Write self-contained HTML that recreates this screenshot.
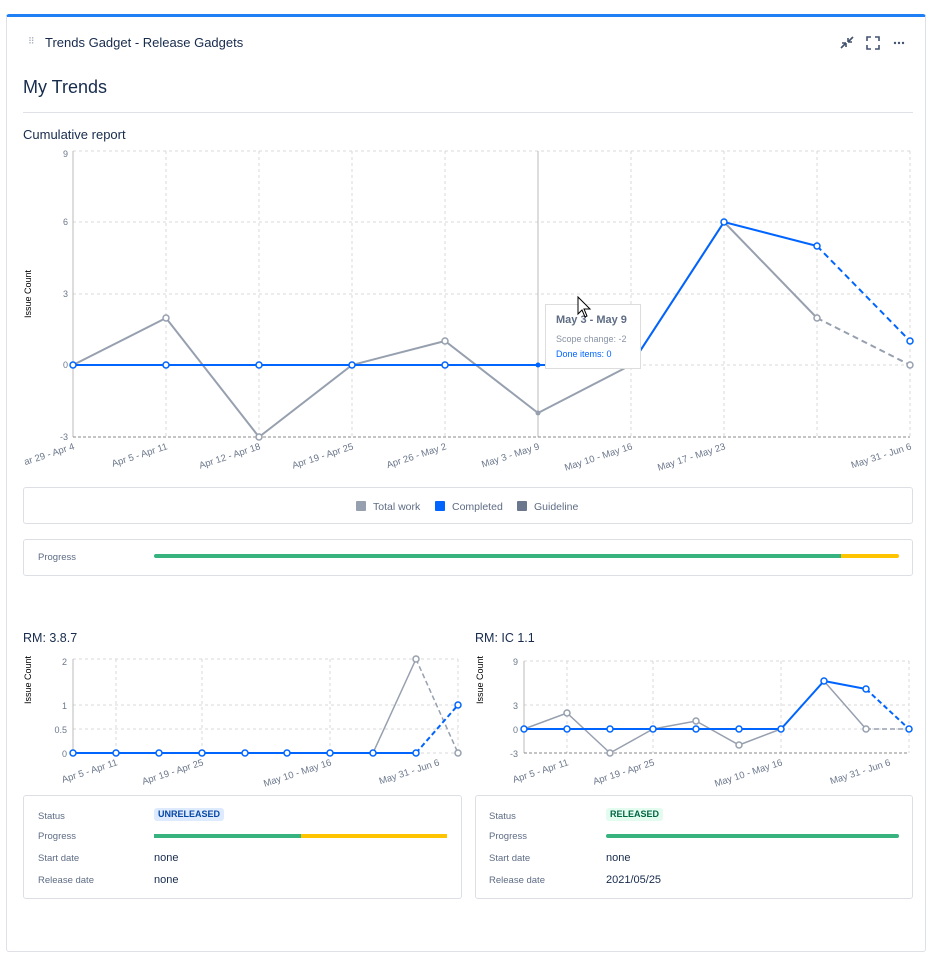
<!DOCTYPE html>
<html><head><meta charset="utf-8"><style>
body{margin:0;background:#fff;font-family:"Liberation Sans",sans-serif;width:933px;height:960px;overflow:hidden;position:relative}
.card{position:absolute;left:6px;top:14px;width:920px;height:938px;border:1px solid #dfe1e6;border-top:3px solid #1f7ff5;border-radius:3px;box-sizing:border-box}
.t{position:absolute;color:#172b4d;white-space:nowrap}
.box{position:absolute;border:1px solid #dcdfe4;border-radius:3px;box-sizing:border-box;background:#fff}
.lbl{position:absolute;font-size:9.5px;color:#5e6c84}
.val{position:absolute;font-size:11px;color:#172b4d}
svg text{font-family:"Liberation Sans",sans-serif}
</style></head><body>
<div class="card"></div>
<div class="t" style="left:28px;top:36px;font-size:9px;color:#a5adba;letter-spacing:-1px">⠿</div>
<div class="t" style="left:45px;top:35px;font-size:13px">Trends Gadget - Release Gadgets</div>
<svg style="position:absolute;left:838px;top:34px" width="70" height="18">
<path d="M3 14 L8 9 M8 9 v4 M8 9 h-4 M15 3 L10 8 M10 8 v-4 M10 8 h4" stroke="#42526e" stroke-width="1.6" fill="none"/>
<path d="M29 7 V3 H33 M37 3 H41 V7 M41 11 V15 H37 M33 15 H29 V11" stroke="#42526e" stroke-width="1.6" fill="none"/>
<circle cx="57" cy="9" r="1.2" fill="#42526e"/><circle cx="61" cy="9" r="1.2" fill="#42526e"/><circle cx="65" cy="9" r="1.2" fill="#42526e"/>
</svg>
<div class="t" style="left:23px;top:77px;font-size:18px">My Trends</div>
<div style="position:absolute;left:23px;top:112px;width:890px;height:1px;background:#dfe1e6"></div>
<div class="t" style="left:23px;top:127px;font-size:13px">Cumulative report</div>

<svg style="position:absolute;left:0;top:140px" width="933" height="340" viewBox="0 140 933 340">
<g stroke="#d8d8d8" stroke-dasharray="3,3" stroke-width="1">
<line x1="73" y1="151" x2="910" y2="151"/><line x1="73" y1="222" x2="910" y2="222"/><line x1="73" y1="294" x2="910" y2="294"/><line x1="73" y1="365" x2="910" y2="365"/>
<line x1="166" y1="151" x2="166" y2="437"/><line x1="259" y1="151" x2="259" y2="437"/><line x1="352" y1="151" x2="352" y2="437"/><line x1="445" y1="151" x2="445" y2="437"/><line x1="631" y1="151" x2="631" y2="437"/><line x1="724" y1="151" x2="724" y2="437"/><line x1="817" y1="151" x2="817" y2="437"/><line x1="910" y1="151" x2="910" y2="437"/>
</g>
<line x1="538" y1="151" x2="538" y2="437" stroke="#bbb"/>
<line x1="73" y1="151" x2="73" y2="437" stroke="#bbb"/>
<line x1="73" y1="437" x2="910" y2="437" stroke="#888" stroke-dasharray="3,2"/>
<g font-size="9" fill="#6b778c" text-anchor="end"><text x="68" y="157">9</text><text x="68" y="225">6</text><text x="68" y="297">3</text><text x="68" y="368">0</text><text x="68" y="440">-3</text></g>
<text transform="translate(31,294) rotate(-90)" font-size="9" fill="#000" text-anchor="middle">Issue Count</text>
<g font-size="9.5" fill="#6b778c" text-anchor="end">
<text transform="translate(75,449) rotate(-18)">ar 29 - Apr 4</text>
<text transform="translate(168,449) rotate(-18)">Apr 5 - Apr 11</text>
<text transform="translate(261,449) rotate(-18)">Apr 12 - Apr 18</text>
<text transform="translate(354,449) rotate(-18)">Apr 19 - Apr 25</text>
<text transform="translate(447,449) rotate(-18)">Apr 26 - May 2</text>
<text transform="translate(540,449) rotate(-18)">May 3 - May 9</text>
<text transform="translate(633,449) rotate(-18)">May 10 - May 16</text>
<text transform="translate(726,449) rotate(-18)">May 17 - May 23</text>
<text transform="translate(912,449) rotate(-18)">May 31 - Jun 6</text>
</g>
<polyline points="73,365 166,318 259,437 352,365 445,341 538,413 631,365 724,222 817,318" fill="none" stroke="#97a0af" stroke-width="2"/>
<line x1="817" y1="318" x2="910" y2="365" stroke="#97a0af" stroke-width="2" stroke-dasharray="6,4"/>
<polyline points="73,365 538,365 631,365 724,222 817,246" fill="none" stroke="#0065ff" stroke-width="2"/>
<line x1="817" y1="246" x2="910" y2="341" stroke="#0065ff" stroke-width="2" stroke-dasharray="6,4"/>
<g fill="#fff" stroke="#97a0af" stroke-width="1.5"><circle cx="166" cy="318" r="3"/><circle cx="259" cy="437" r="3"/><circle cx="445" cy="341" r="3"/><circle cx="817" cy="318" r="3"/><circle cx="910" cy="365" r="3"/></g>
<circle cx="538" cy="413" r="2.5" fill="#97a0af"/>
<g fill="#fff" stroke="#0065ff" stroke-width="1.5"><circle cx="73" cy="365" r="3"/><circle cx="166" cy="365" r="3"/><circle cx="259" cy="365" r="3"/><circle cx="352" cy="365" r="3"/><circle cx="445" cy="365" r="3"/><circle cx="724" cy="222" r="3"/><circle cx="817" cy="246" r="3"/><circle cx="910" cy="341" r="3"/></g>
<circle cx="538" cy="365" r="2.5" fill="#0065ff"/>
<rect x="545.5" y="304.5" width="95" height="64" fill="#fff" stroke="#ddd"/>
<text x="556" y="323" font-size="11" font-weight="bold" fill="#5e6c84">May 3 - May 9</text>
<text x="556" y="342" font-size="9" fill="#8993a4">Scope change: -2</text>
<text x="556" y="357" font-size="9" fill="#0065ff">Done items: 0</text>
<path d="M578 297 L578 314 L582 310 L585 317 L587 316 L584 309 L590 309 Z" fill="#fff" stroke="#000"/>
</svg>

<div class="box" style="left:23px;top:487px;width:890px;height:37px"></div>
<svg style="position:absolute;left:355px;top:500px" width="240" height="14">
<rect x="1" y="1" width="10" height="10" rx="1" fill="#97a0af"/><text x="18" y="10" font-size="10.5" fill="#5e6c84">Total work</text>
<rect x="80" y="1" width="10" height="10" rx="1" fill="#0065ff"/><text x="97" y="10" font-size="10.5" fill="#5e6c84">Completed</text>
<rect x="162" y="1" width="10" height="10" rx="1" fill="#6b778c"/><text x="179" y="10" font-size="10.5" fill="#5e6c84">Guideline</text>
</svg>
<div class="box" style="left:23px;top:539px;width:890px;height:37px"></div>
<div class="lbl" style="left:38px;top:552px">Progress</div>
<div style="position:absolute;left:154px;top:554px;width:687px;height:4px;background:#36b37e;border-radius:2px 0 0 2px"></div>
<div style="position:absolute;left:841px;top:554px;width:58px;height:4px;background:#ffc400;border-radius:0 2px 2px 0"></div>

<div class="t" style="left:23px;top:631px;font-size:12.5px">RM: 3.8.7</div>
<div class="t" style="left:475px;top:631px;font-size:12.5px">RM: IC 1.1</div>

<svg style="position:absolute;left:0;top:650px" width="933" height="140" viewBox="0 650 933 140">
<g stroke="#d8d8d8" stroke-dasharray="3,3">
<line x1="73" y1="659" x2="458" y2="659"/><line x1="73" y1="705" x2="458" y2="705"/><line x1="73" y1="729" x2="458" y2="729"/><line x1="73" y1="753" x2="458" y2="753"/>
<line x1="116" y1="659" x2="116" y2="753"/><line x1="202" y1="659" x2="202" y2="753"/><line x1="330" y1="659" x2="330" y2="753"/><line x1="458" y1="659" x2="458" y2="753"/>
<line x1="524" y1="661" x2="909" y2="661"/><line x1="524" y1="705" x2="909" y2="705"/><line x1="524" y1="729" x2="909" y2="729"/>
<line x1="567" y1="661" x2="567" y2="753"/><line x1="653" y1="661" x2="653" y2="753"/><line x1="781" y1="661" x2="781" y2="753"/><line x1="909" y1="661" x2="909" y2="753"/>
</g>
<line x1="73" y1="659" x2="73" y2="753" stroke="#bbb"/><line x1="524" y1="661" x2="524" y2="753" stroke="#bbb"/>
<line x1="524" y1="753" x2="909" y2="753" stroke="#888" stroke-dasharray="3,2"/>
<g font-size="9" fill="#6b778c" text-anchor="end"><text x="67" y="665">2</text><text x="67" y="709">1</text><text x="67" y="733">0.5</text><text x="67" y="757">0</text>
<text x="518" y="665">9</text><text x="518" y="709">3</text><text x="518" y="733">0</text><text x="518" y="757">-3</text></g>
<text transform="translate(31,680) rotate(-90)" font-size="9" fill="#000" text-anchor="middle">Issue Count</text>
<text transform="translate(483,680) rotate(-90)" font-size="9" fill="#000" text-anchor="middle">Issue Count</text>
<g font-size="9.5" fill="#6b778c" text-anchor="end">
<text transform="translate(118,765) rotate(-18)">Apr 5 - Apr 11</text>
<text transform="translate(204,765) rotate(-18)">Apr 19 - Apr 25</text>
<text transform="translate(332,765) rotate(-18)">May 10 - May 16</text>
<text transform="translate(440,765) rotate(-18)">May 31 - Jun 6</text>
<text transform="translate(569,765) rotate(-18)">Apr 5 - Apr 11</text>
<text transform="translate(655,765) rotate(-18)">Apr 19 - Apr 25</text>
<text transform="translate(783,765) rotate(-18)">May 10 - May 16</text>
<text transform="translate(891,765) rotate(-18)">May 31 - Jun 6</text>
</g>
<polyline points="373,753 416,659" fill="none" stroke="#97a0af" stroke-width="1.5"/>
<line x1="416" y1="659" x2="458" y2="753" stroke="#97a0af" stroke-width="1.5" stroke-dasharray="5,3"/>
<line x1="73" y1="753" x2="416" y2="753" stroke="#0065ff" stroke-width="2"/>
<line x1="416" y1="753" x2="458" y2="705" stroke="#0065ff" stroke-width="2" stroke-dasharray="5,3"/>
<g fill="#fff" stroke="#97a0af" stroke-width="1.5"><circle cx="416" cy="659" r="3"/><circle cx="458" cy="753" r="3"/></g>
<g fill="#fff" stroke="#0065ff" stroke-width="1.5"><circle cx="73" cy="753" r="3"/><circle cx="116" cy="753" r="3"/><circle cx="159" cy="753" r="3"/><circle cx="202" cy="753" r="3"/><circle cx="245" cy="753" r="3"/><circle cx="287" cy="753" r="3"/><circle cx="330" cy="753" r="3"/><circle cx="373" cy="753" r="3"/><circle cx="416" cy="753" r="3"/><circle cx="458" cy="705" r="3"/></g>

<polyline points="524,729 567,713 610,753 653,729 696,721 739,745 781,729 824,681 866,729" fill="none" stroke="#97a0af" stroke-width="1.5"/>
<line x1="866" y1="729" x2="909" y2="729" stroke="#97a0af" stroke-width="1.5" stroke-dasharray="5,3"/>
<polyline points="524,729 781,729 824,681 866,689" fill="none" stroke="#0065ff" stroke-width="2"/>
<line x1="866" y1="689" x2="909" y2="729" stroke="#0065ff" stroke-width="2" stroke-dasharray="5,3"/>
<g fill="#fff" stroke="#97a0af" stroke-width="1.5"><circle cx="567" cy="713" r="3"/><circle cx="610" cy="753" r="3"/><circle cx="696" cy="721" r="3"/><circle cx="739" cy="745" r="3"/><circle cx="866" cy="729" r="3"/></g>
<g fill="#fff" stroke="#0065ff" stroke-width="1.5"><circle cx="524" cy="729" r="3"/><circle cx="567" cy="729" r="3"/><circle cx="610" cy="729" r="3"/><circle cx="653" cy="729" r="3"/><circle cx="696" cy="729" r="3"/><circle cx="739" cy="729" r="3"/><circle cx="781" cy="729" r="3"/><circle cx="824" cy="681" r="3"/><circle cx="866" cy="689" r="3"/><circle cx="909" cy="729" r="3"/></g>
</svg>

<div class="box" style="left:23px;top:795px;width:439px;height:104px"></div>
<div class="lbl" style="left:38px;top:811px">Status</div>
<div style="position:absolute;left:154px;top:808px;padding:0 4px;height:13px;line-height:13px;background:#deebff;color:#0747a6;font-size:9px;font-weight:bold;border-radius:3px">UNRELEASED</div>
<div class="lbl" style="left:38px;top:831px">Progress</div>
<div style="position:absolute;left:154px;top:834px;width:147px;height:4px;background:#36b37e"></div>
<div style="position:absolute;left:301px;top:834px;width:146px;height:4px;background:#ffc400"></div>
<div class="lbl" style="left:38px;top:853px">Start date</div><div class="val" style="left:154px;top:852px">none</div>
<div class="lbl" style="left:38px;top:875px">Release date</div><div class="val" style="left:154px;top:874px">none</div>

<div class="box" style="left:475px;top:795px;width:438px;height:104px"></div>
<div class="lbl" style="left:489px;top:811px">Status</div>
<div style="position:absolute;left:606px;top:808px;padding:0 4px;height:13px;line-height:13px;background:#e3fcef;color:#006644;font-size:9px;font-weight:bold;border-radius:3px">RELEASED</div>
<div class="lbl" style="left:489px;top:831px">Progress</div>
<div style="position:absolute;left:606px;top:834px;width:293px;height:4px;background:#36b37e;border-radius:2px"></div>
<div class="lbl" style="left:489px;top:853px">Start date</div><div class="val" style="left:606px;top:852px">none</div>
<div class="lbl" style="left:489px;top:875px">Release date</div><div class="val" style="left:606px;top:874px">2021/05/25</div>
</body></html>
